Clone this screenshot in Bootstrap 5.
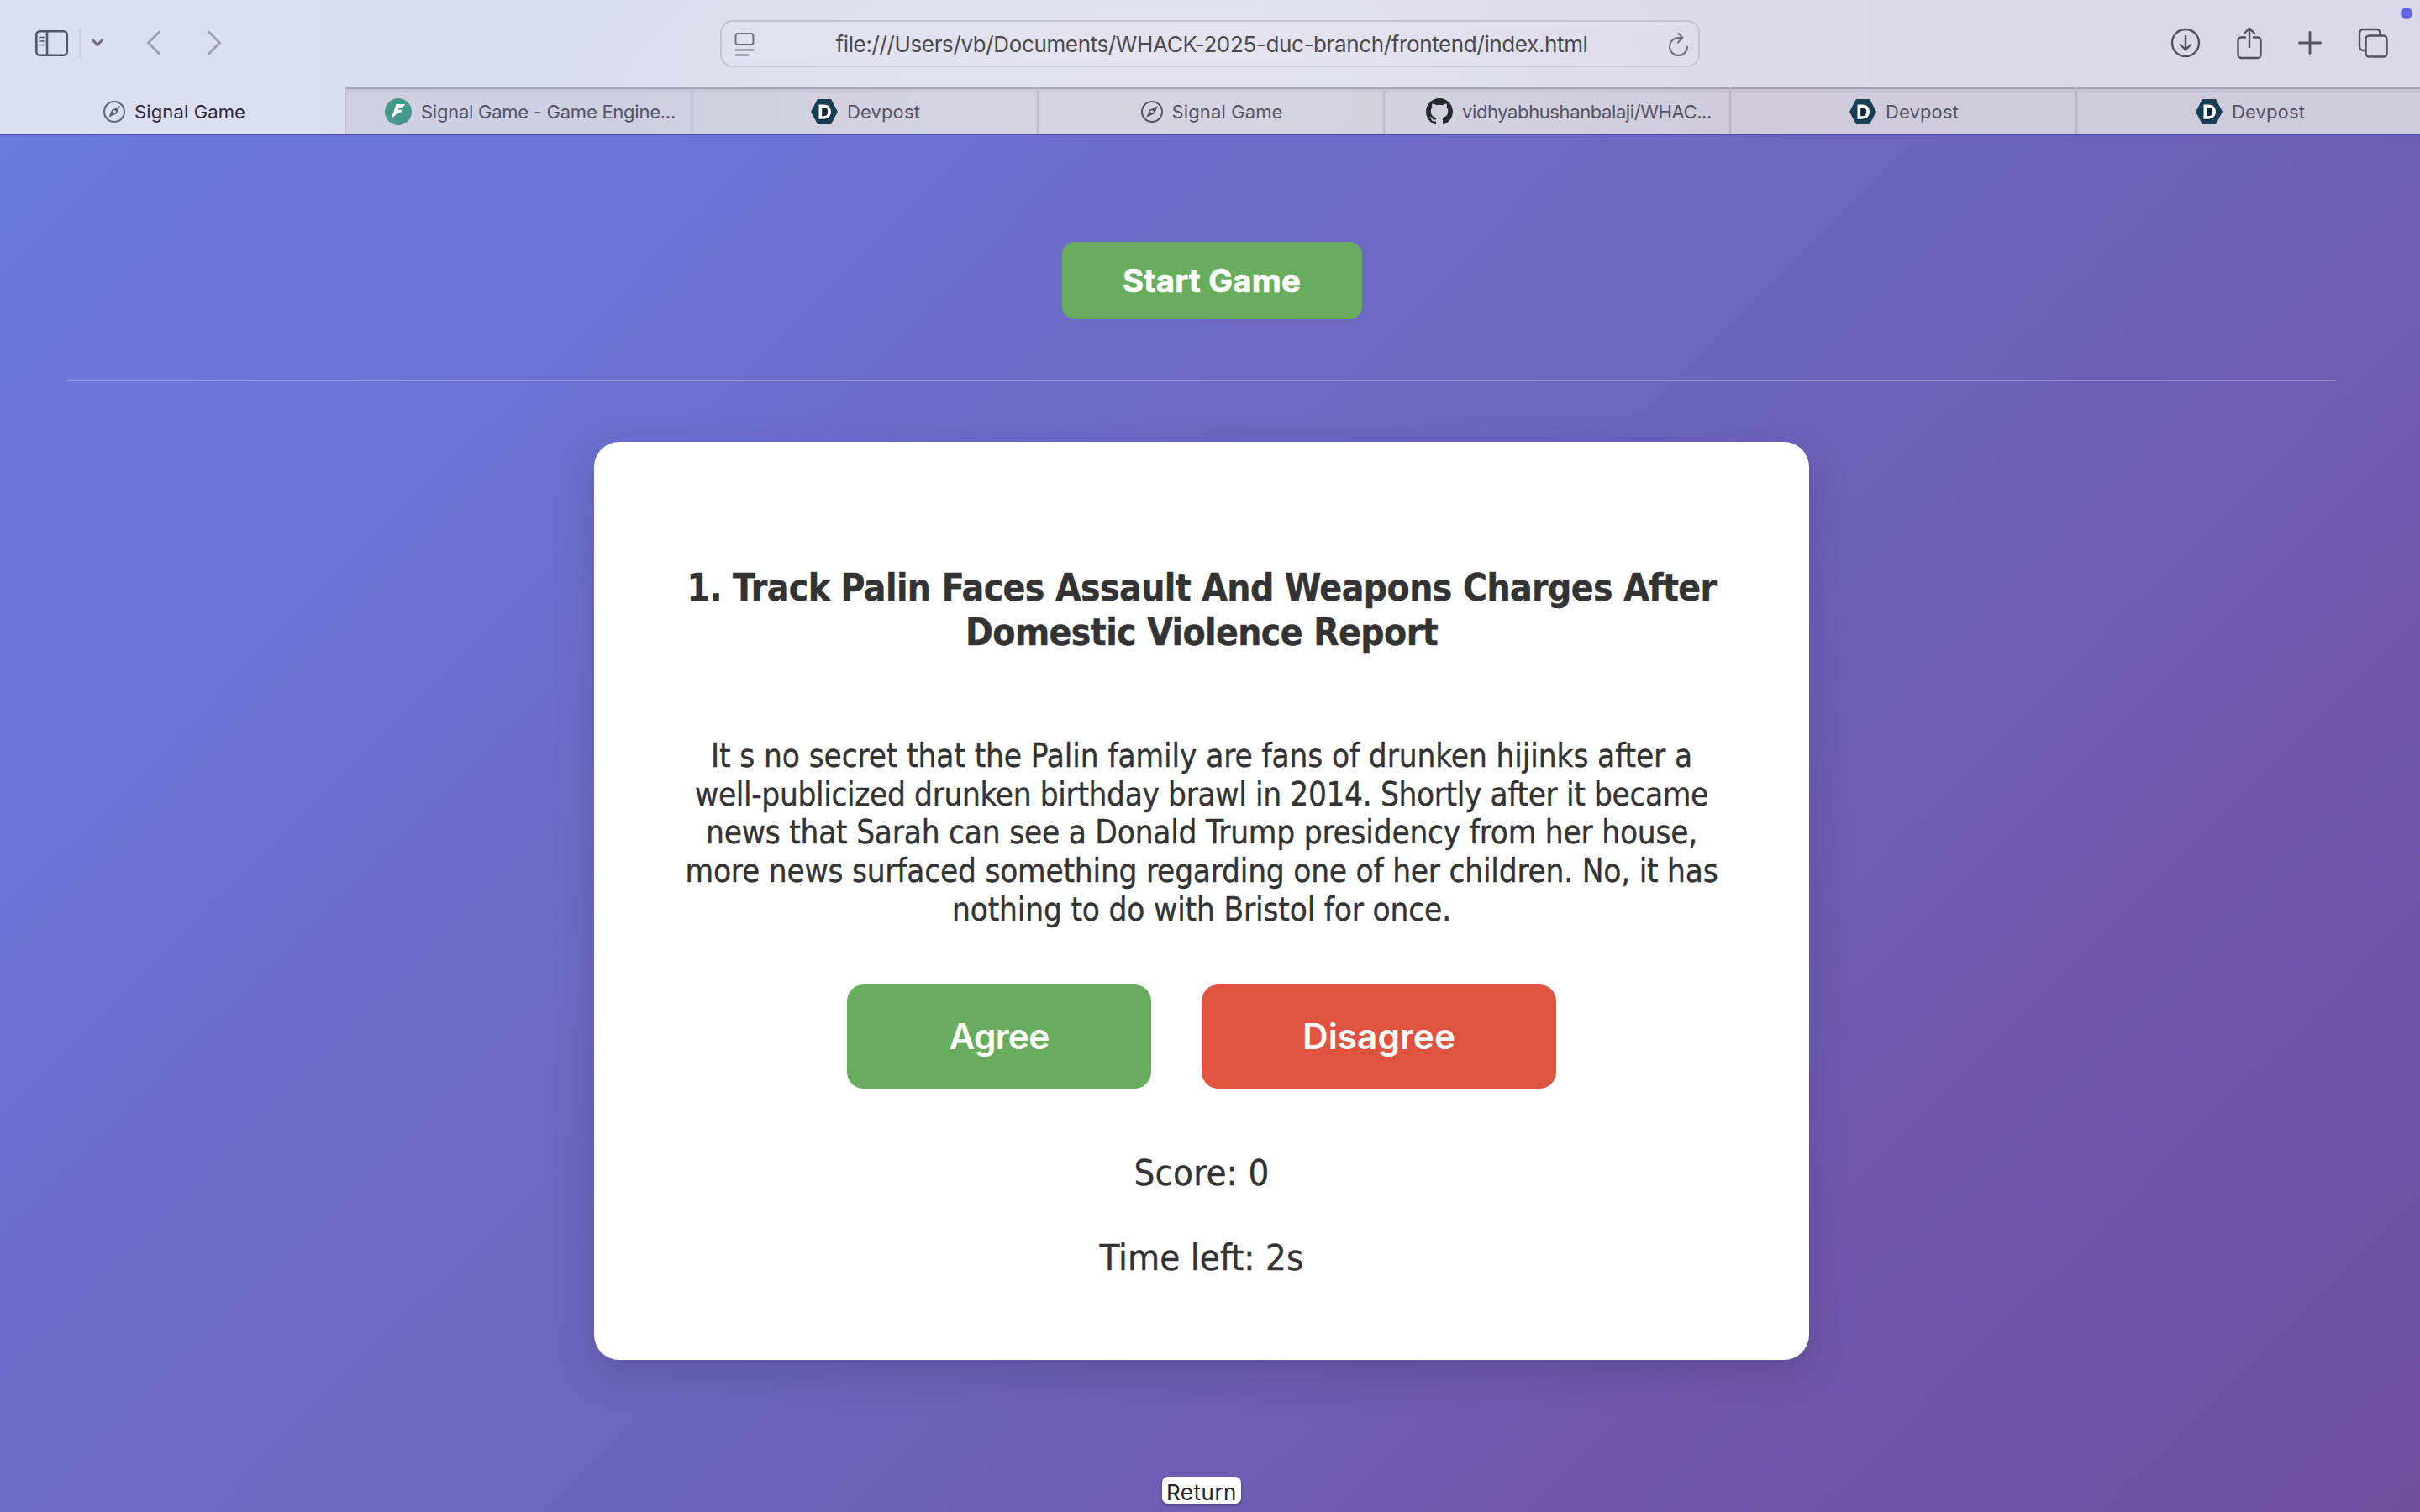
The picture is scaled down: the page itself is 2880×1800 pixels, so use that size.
<!DOCTYPE html>
<html lang="en">
<head>
  <meta charset="UTF-8">
  <meta name="viewport" content="width=device-width, initial-scale=1">
  <title>Signal Game</title>
  <!-- Bootstrap CSS -->
  <link href="https://cdn.jsdelivr.net/npm/bootstrap@5.3.0/dist/css/bootstrap.min.css" rel="stylesheet">
  <style>
    body { width: 2880px; height: 1800px; overflow: hidden; font-family: Inter, "Liberation Sans", sans-serif; }
    svg { display: block; flex: none; fill: none; stroke-linecap: round; stroke-linejoin: round; }
    [data-w] { white-space: nowrap; }

    /* Browser window */
    .browser { height: 161px; border-bottom: 1px solid #4b4bae; background: radial-gradient(ellipse 700px 260px at 1370px 120px, #e3e2ee, rgba(226,226,238,0)), linear-gradient(90deg, #dcdff1 0, #dcddf0 800px, #dfdeec 1500px, #dcd9ea 2050px, #dbd9e9 100%); }
    .toolbar { height: 104px; color: #53515f; }
    .side-tools { width: 857px; padding-left: 42px; padding-bottom: 2px; color: #55546a; }
    .side-tools .rule { width: 2px; height: 36px; margin: 0 13px; background: #cfcfe0; }
    .side-tools .forward { margin-left: 54px; }
    .address { width: 1166px; height: 56px; border: 2px solid #c5c4d3; border-radius: 15px; padding: 1px 11px 0 15px; background: rgba(255,255,255,.08); font-size: 26px; line-height: 52px; color: #4a4a4b; }
    .address svg { stroke: #71707b; }
    .right-tools { gap: 43px; padding-right: 38px; padding-bottom: 2px; }
    .status-dot { top: 9px; right: 9px; width: 14px; height: 14px; background: #6462e8; }
    .tab-strip { height: 56px; }
    .tab-item { flex: none; width: 412px; gap: 11px; padding: 2px 0 0 2px; font-size: 22px; line-height: 54px; color: #555365; }
    .tab-item.current { color: #2a293c; width: 410px; padding-left: 5px; }
    .tab-item:not(.current) { background: rgba(50,40,60,.075); border-left: 2px solid rgba(60,50,90,.13); box-shadow: inset 0 2px 0 rgba(60,55,80,.2), inset 0 5px 4px -2px rgba(60,55,80,.12); }
    .tab-item.wide { padding-left: 28px; }

    /* Page */
    .game-page { height: 1639px; padding: 127px 20px 0 0; background: linear-gradient(135deg, #6a7ade 0%, #6d65be 50%, #6f4e9f 100%); }
    .btn-game { border: 0; color: #fff; background: #68ad5d; }
    .btn-game:hover { color: #fff; background: #5c9c52; }
    .btn-start { width: 357px; height: 92px; margin-left: 24px; border-radius: 15px; padding: 2px 0 0; font-size: 38.4px; font-weight: 700; -webkit-text-stroke: .6px #fff; }
    .page-rule { width: 2700px; height: 2px; margin-top: 72px; background: rgba(255,255,255,.3); }
    .question-card { width: 1446.6px; height: 1092.4px; margin-top: 72.3px; padding-top: 147px; border: 0; border-radius: 30px; color: #333; font-family: "DejaVu Sans Condensed", "DejaVu Sans", sans-serif; font-stretch: condensed; box-shadow: 0 16px 50px rgba(0,0,0,.15); }
    .headline { font-size: 44px; line-height: 53px; font-weight: 700; margin: 0 0 98px; -webkit-text-stroke: .4px #333; }
    .story { font-size: 38.4px; line-height: 45.6px; margin: 0 0 67px; -webkit-text-stroke: .35px #333; }
    .answers { gap: 60px; font-family: Inter, sans-serif; }
    .btn-answer { height: 123.4px; border-radius: 20px; font-size: 42.4px; font-weight: 600; padding: 0; }
    .btn-agree { width: 362px; }
    .btn-disagree, .btn-disagree:hover { width: 422px; background: #e05341; }
    .status-line { font-size: 43.5px; line-height: 53px; -webkit-text-stroke: .35px #333; }
    .score-line { margin: 74.6px 0 47.7px; }
    .return-hint { margin-top: 139.6px; width: 94px; height: 32px; border-radius: 7px; background: #fff; color: #262626; font-size: 26px; line-height: 38px; box-shadow: 0 2px 3px rgba(0,0,0,.35); }
  </style>
</head>
<body>
  <!-- Shared icons -->
  <svg class="d-none">
    <symbol id="compass" viewBox="0 0 26 26">
      <circle cx="13" cy="13" r="12" stroke="currentColor" stroke-width="2"/>
      <path fill="currentColor" fill-rule="evenodd" d="M19.8 6.2 15.9 15.2 6.2 19.8 10.4 10.6zM13 11.2a1.8 1.8 0 1 0 .01 0z"/>
    </symbol>
    <symbol id="devpost" viewBox="0 0 32 30">
      <path fill="#183e53" d="M8 0h16l8 15-8 15H8L0 15z"/>
      <path fill="#0b2738" d="M12 8h5l7 4v8l-5 5h-8z"/>
      <path fill="#fff" fill-rule="evenodd" d="M9.5 6.5h5.7c5.5 0 8.8 3.3 8.8 8.5s-3.3 8.7-8.8 8.700H9.5zM13.2 10v10.3h2c3.2 0 5-1.9 5-5.3 0-3.2-1.800-5-5-5z"/>
    </symbol>
  </svg>

  <header class="browser position-relative">
    <div class="toolbar d-flex align-items-center">
      <div class="side-tools d-flex align-items-center">
        <svg width="39" height="31" viewBox="0 0 39 31" stroke="currentColor" stroke-width="2.6"><rect x="1.3" y="1.3" width="36.4" height="28.4" rx="4"/><path d="M14 1.5v28"/><path stroke-width="1.7" d="M6 8.5h4M6 13h4M6 17.5h4"/></svg>
        <div class="rule"></div>
        <svg width="14" height="10" viewBox="0 0 14 10" stroke="#6e6c86" stroke-width="3"><path d="M1.7 2 7 7.5 12.3 2"/></svg>
        <svg class="ms-5" width="20" height="30" viewBox="-3 0 20 30" stroke="#9d9cb1" stroke-width="2.8"><path d="M15.500 2 2.500 15l13 13"/></svg>
        <svg class="forward" width="20" height="30" viewBox="-1 0 20 30" stroke="#9d9cb1" stroke-width="2.8"><path d="M2.500 2l13 13-13 13"/></svg>
      </div>
      <div class="address d-flex align-items-center justify-content-between">
        <svg width="24" height="28" viewBox="0 0 24 28" stroke-width="2"><rect x="1.500" y="1" width="21" height="13" rx="2.500"/><path d="M1.500 20.500h21M1.500 26.500h15"/></svg>
        <span data-w="895">file:///Users/vb/Documents/WHACK-2025-duc-branch/frontend/index.html</span>
        <svg width="24" height="28" viewBox="0 0 24 28" stroke-width="2"><path d="M22 16.500A10.500 10.500 0 1 1 11.500 6h5M11.500 1l5 5-5.500 5.500"/></svg>
      </div>
      <div class="right-tools d-flex align-items-center ms-auto">
        <svg width="36" height="36" viewBox="0 0 36 36" stroke="currentColor" stroke-width="2.4"><circle cx="18" cy="18" r="16"/><path d="M18 10v16M11.700 20l6.300 6.300 6.300-6.300"/></svg>
        <svg width="30" height="40" viewBox="0 0 30 40" stroke="currentColor" stroke-width="2.4"><path d="M10 13.500H5a3.500 3.500 0 0 0-3.500 3.500v17.500A3.500 3.500 0 0 0 5 38h20a3.500 3.500 0 0 0 3.500-3.500V17a3.500 3.500 0 0 0-3.500-3.500h-5M15 25V3M9.200 8.500 15 2.700l5.800 5.800"/></svg>
        <svg width="28" height="28" viewBox="0 0 28 28" stroke="currentColor" stroke-width="2.8"><path d="M14 1.500v25M1.500 14h25"/></svg>
        <svg width="36" height="36" viewBox="0 0 36 36" stroke="currentColor" stroke-width="2.4"><path d="M9 27H6.500A4.500 4.500 0 0 1 2 22.500v-16A4.500 4.500 0 0 1 6.500 2H22a4.500 4.500 0 0 1 4.500 4.500V9"/><rect x="9.500" y="9.500" width="25" height="25" rx="4"/></svg>
      </div>
    </div>
    <div class="status-dot position-absolute rounded-circle"></div>

    <div class="tab-strip d-flex">
      <div class="tab-item current d-flex align-items-center justify-content-center"><svg width="26" height="26" color="#626075"><use href="#compass"/></svg><span data-w="132">Signal Game</span></div>
      <div class="tab-item wide d-flex align-items-center justify-content-center">
        <svg width="32" height="32" viewBox="0 0 32 32"><circle cx="16" cy="16" r="16" fill="#46998a"/><path fill="#fff" d="M13.500 7h10.700l-3.500 4.500h-4l-.8 2.300h5.600l-3.500 4h-3L7.500 24.500z"/></svg>
        <span data-w="303">Signal Game - Game Engine...</span>
      </div>
      <div class="tab-item d-flex align-items-center justify-content-center"><svg width="32" height="30"><use href="#devpost"/></svg><span data-w="87">Devpost</span></div>
      <div class="tab-item d-flex align-items-center justify-content-center"><svg width="26" height="26"><use href="#compass"/></svg><span data-w="132">Signal Game</span></div>
      <div class="tab-item wide d-flex align-items-center justify-content-center">
        <svg width="32" height="32" viewBox="0 0 16 16"><path fill="#24292f" d="M8 0C3.580 0 0 3.580 0 8c0 3.540 2.290 6.530 5.470 7.590.4.070.55-.17.55-.38 0-.19-.01-.82-.01-1.490-2.010.37-2.530-.49-2.690-.94-.09-.23-.48-.94-.82-1.130-.28-.15-.68-.52-.01-.53.63-.01 1.080.58 1.230.82.72 1.210 1.870.87 2.330.66.070-.52.28-.87.51-1.070-1.780-.2-3.640-.89-3.640-3.950 0-.87.31-1.590.82-2.150-.08-.2-.36-1.020.08-2.120 0 0 .67-.21 2.200.82.64-.18 1.320-.27 2-.27s1.360.09 2 .27c1.530-1.040 2.200-.82 2.200-.82.44 1.100.16 1.920.08 2.120.51.56.82 1.270.82 2.150 0 3.070-1.870 3.750-3.650 3.950.29.25.54.73.54 1.480 0 1.070-.01 1.930-.01 2.200 0 .21.15.46.55.38A8.010 8.010 0 0 0 16 8c0-4.420-3.580-8-8-8z"/></svg>
        <span data-w="297">vidhyabhushanbalaji/WHAC...</span>
      </div>
      <div class="tab-item d-flex align-items-center justify-content-center"><svg width="32" height="30"><use href="#devpost"/></svg><span data-w="87">Devpost</span></div>
      <div class="tab-item d-flex align-items-center justify-content-center"><svg width="32" height="30"><use href="#devpost"/></svg><span data-w="87">Devpost</span></div>
    </div>
  </header>

  <!-- Game -->
  <main class="game-page d-flex flex-column align-items-center">
    <button class="btn btn-game btn-start" type="button"><span data-w="212">Start Game</span></button>
    <div class="page-rule"></div>

    <section class="card question-card text-center">
      <h1 class="headline">
        <span data-w="1225">1. Track Palin Faces Assault And Weapons Charges After</span><br>
        <span data-w="562">Domestic Violence Report</span>
      </h1>
      <p class="story">
        <span data-w="1168">It s no secret that the Palin family are fans of drunken hijinks after a</span><br>
        <span data-w="1206">well-publicized drunken birthday brawl in 2014. Shortly after it became</span><br>
        <span data-w="1180">news that Sarah can see a Donald Trump presidency from her house,</span><br>
        <span data-w="1229">more news surfaced something regarding one of her children. No, it has</span><br>
        <span data-w="594">nothing to do with Bristol for once.</span>
      </p>
      <div class="answers d-flex justify-content-center">
        <button class="btn btn-game btn-answer btn-agree" type="button"><span data-w="119">Agree</span></button>
        <button class="btn btn-game btn-answer btn-disagree" type="button"><span data-w="182">Disagree</span></button>
      </div>
      <div class="status-line score-line"><span data-w="161">Score: 0</span></div>
      <div class="status-line"><span data-w="243">Time left: 2s</span></div>
    </section>

    <div class="return-hint text-center"><span data-w="84">Return</span></div>
  </main>

  <!-- Bootstrap JS Bundle -->
  <script src="https://cdn.jsdelivr.net/npm/bootstrap@5.3.0/dist/js/bootstrap.bundle.min.js"></script>
  <script>
    // Track each label so it fills its data-w width
    document.querySelectorAll('[data-w]').forEach(label => {
      const extra = Number(label.dataset.w) - label.getBoundingClientRect().width;
      label.style.letterSpacing = (extra / label.textContent.length) + 'px';
    });
  </script>
</body>
</html>
